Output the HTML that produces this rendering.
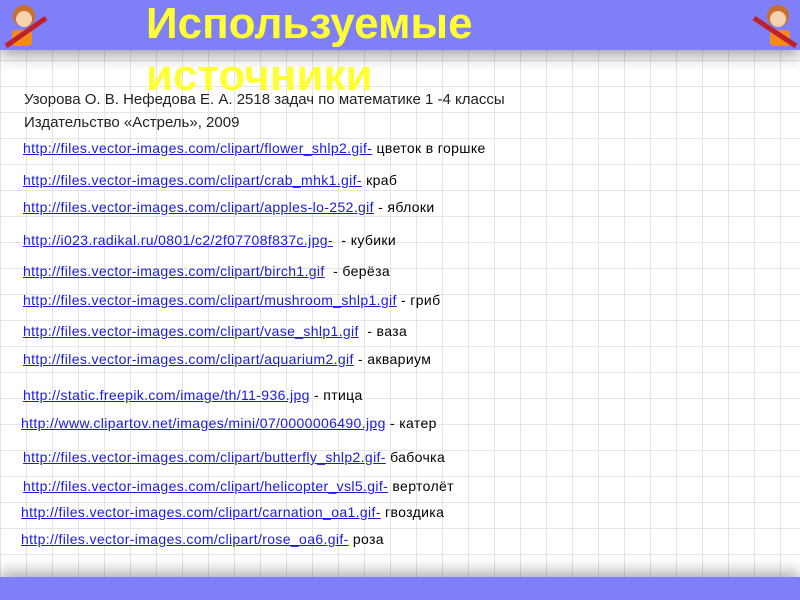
<!DOCTYPE html><html><head><meta charset="utf-8"><style>
body{margin:0;width:800px;height:600px;position:relative;overflow:hidden;font-family:"Liberation Sans",sans-serif;
background-color:#fff;background-image:linear-gradient(#e4e4e4 1px,transparent 1px),linear-gradient(90deg,#e4e4e4 1px,transparent 1px);background-size:26px 26px;background-position:0 8px}
.top{position:absolute;left:0;top:0;width:800px;height:50px;background:#7f7ff7;box-shadow:0 6px 14px rgba(0,0,0,.35)}
.bot{position:absolute;left:0;bottom:0;width:800px;height:23px;background:#7f7ff7;box-shadow:0 -6px 14px rgba(0,0,0,.3)}
.t{position:absolute;color:#ffff33;font-weight:bold;font-size:44px;left:146px;line-height:44px}
.l{position:absolute;left:23px;font-size:14px;color:#000;white-space:nowrap;letter-spacing:.36px}
.l a{color:#1a1ae0;text-decoration:underline}
.b{position:absolute;left:24px;font-size:15px;color:#222}
.boy{position:absolute;top:2px;width:46px;height:46px}
</style></head><body>
<div class="top"></div><div class="bot"></div>
<svg class="boy" style="left:2px" viewBox="0 0 46 46"><circle cx="22" cy="14" r="11" fill="#c9702a"/><circle cx="22" cy="17" r="8" fill="#f6d2b0"/><rect x="10" y="28" width="20" height="16" rx="4" fill="#f58a1f"/><line x1="4" y1="44" x2="44" y2="16" stroke="#c0202a" stroke-width="5"/></svg>
<svg class="boy" style="left:752px" viewBox="0 0 46 46"><circle cx="26" cy="14" r="11" fill="#c9702a"/><circle cx="26" cy="17" r="8" fill="#f6d2b0"/><rect x="18" y="28" width="20" height="16" rx="4" fill="#f58a1f"/><line x1="2" y1="16" x2="44" y2="44" stroke="#c0202a" stroke-width="5"/></svg>
<div class="t" style="top:2px">Используемые</div>
<div class="t" style="top:54px">источники</div>
<div class="b" style="top:91px">Узорова О. В. Нефедова Е. А. 2518 задач по математике 1 -4 классы</div>
<div class="b" style="top:114px">Издательство «Астрель», 2009</div>
<div class="l" style="top:140px"><a>http://files.vector-images.com/clipart/flower_shlp2.gif-</a> цветок в горшке</div>
<div class="l" style="top:172px"><a>http://files.vector-images.com/clipart/crab_mhk1.gif-</a> краб</div>
<div class="l" style="top:199px"><a>http://files.vector-images.com/clipart/apples-lo-252.gif</a> - яблоки</div>
<div class="l" style="top:232px"><a>http://i023.radikal.ru/0801/c2/2f07708f837c.jpg-</a>&nbsp; - кубики</div>
<div class="l" style="top:263px"><a>http://files.vector-images.com/clipart/birch1.gif</a>&nbsp; - берёза</div>
<div class="l" style="top:292px"><a>http://files.vector-images.com/clipart/mushroom_shlp1.gif</a> - гриб</div>
<div class="l" style="top:323px"><a>http://files.vector-images.com/clipart/vase_shlp1.gif</a>&nbsp; - ваза</div>
<div class="l" style="top:351px"><a>http://files.vector-images.com/clipart/aquarium2.gif</a> - аквариум</div>
<div class="l" style="top:387px"><a>http://static.freepik.com/image/th/11-936.jpg</a> - птица</div>
<div class="l" style="top:415px;left:21px"><a>http://www.clipartov.net/images/mini/07/0000006490.jpg</a> - катер</div>
<div class="l" style="top:449px"><a>http://files.vector-images.com/clipart/butterfly_shlp2.gif-</a> бабочка</div>
<div class="l" style="top:478px"><a>http://files.vector-images.com/clipart/helicopter_vsl5.gif-</a> вертолёт</div>
<div class="l" style="top:504px;left:21px"><a>http://files.vector-images.com/clipart/carnation_oa1.gif-</a> гвоздика</div>
<div class="l" style="top:531px;left:21px"><a>http://files.vector-images.com/clipart/rose_oa6.gif-</a> роза</div>
</body></html>
